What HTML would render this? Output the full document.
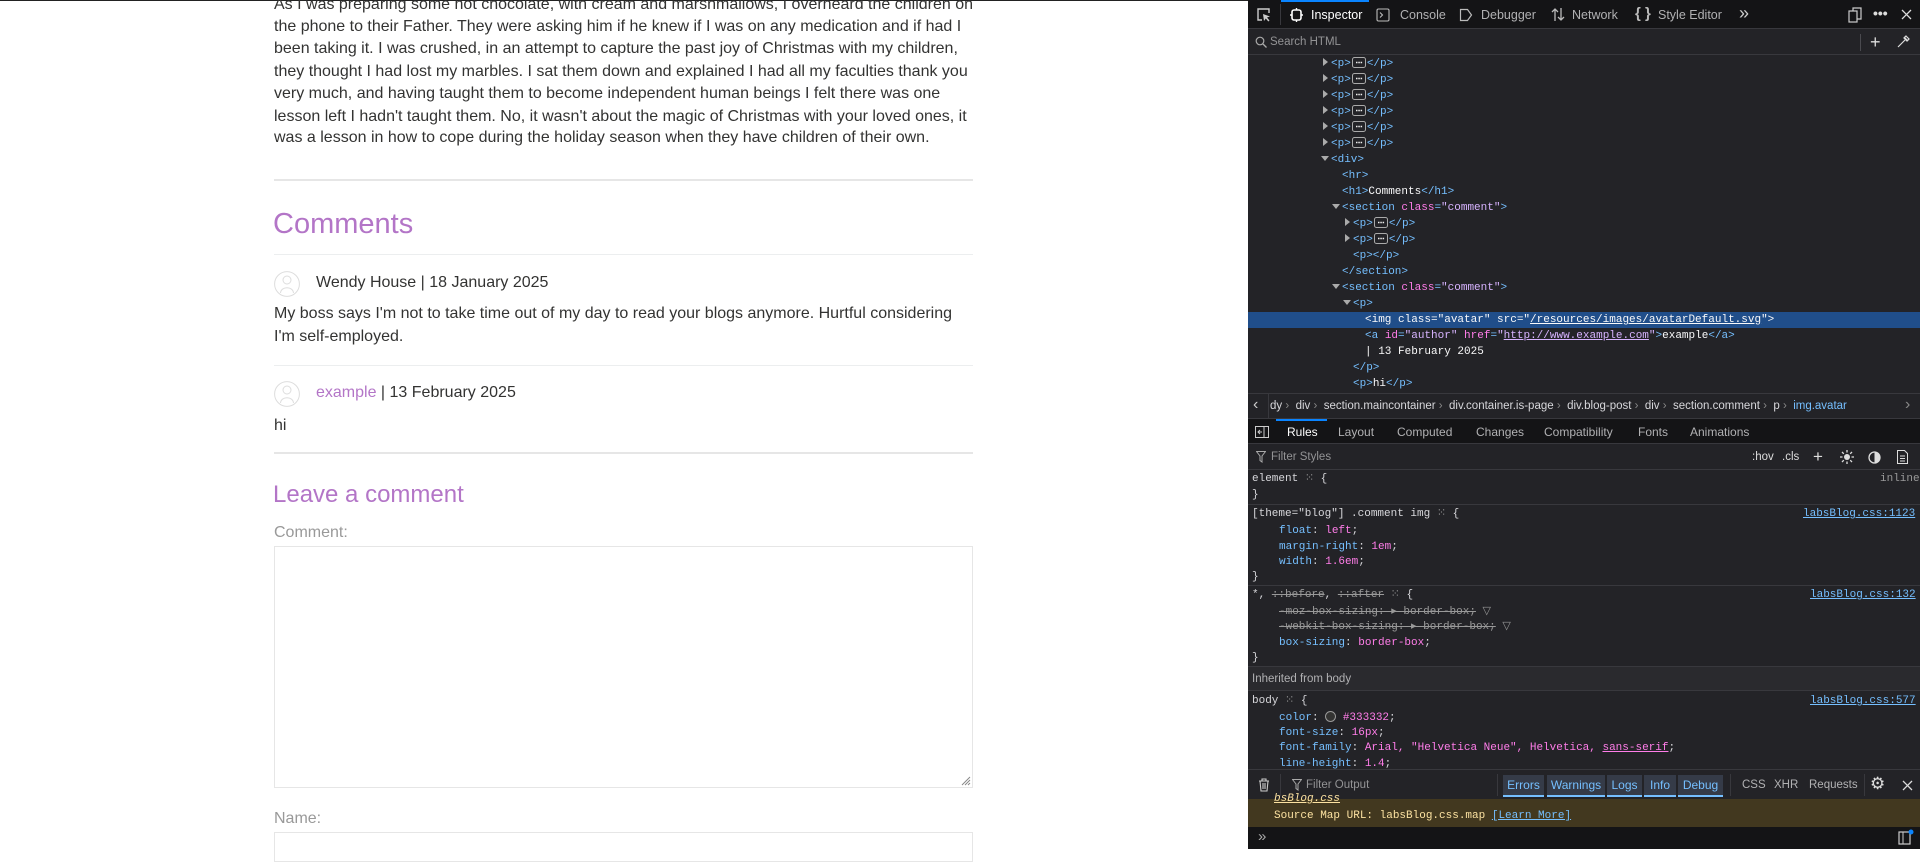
<!DOCTYPE html>
<html><head><meta charset="utf-8"><style>
*{margin:0;padding:0;box-sizing:border-box}
body{width:1920px;height:849px;overflow:hidden;background:#fff;position:relative;font-family:"Liberation Sans",Arial,sans-serif}
.a{position:absolute;white-space:nowrap}
.pg{color:#333332;font-size:16px;line-height:22px}
.pur{color:#b375c7}
.hr{position:absolute;left:274px;width:699px}
.dt{position:absolute;left:1248px;top:0;width:672px;height:849px;background:#232327;overflow:hidden;font-family:"Liberation Sans",sans-serif;font-size:12px;color:#d7d7db}
.m{font-family:"Liberation Mono",monospace;font-size:11px;line-height:16px;height:16px}
.t{color:#75bfff}.n{color:#ff7de9}.v{color:#d7b3ff}.w{color:#f9f9fa}
.tri{display:inline-block;width:0;height:0;border-left:5px solid #aaa;border-top:4px solid transparent;border-bottom:4px solid transparent;margin-right:3px}
.trd{display:inline-block;width:0;height:0;border-top:5px solid #aaa;border-left:4px solid transparent;border-right:4px solid transparent;margin-right:2px;vertical-align:1px}
.dots{display:inline-block;vertical-align:-2px;margin:0 1px}
.pr{color:#75bfff}.pv{color:#ff7de9}
.lnk{color:#75bfff;text-decoration:underline}
.sep{position:absolute;left:0;width:672px;height:1px;background:#38383d}
.cb{position:absolute;top:775px;height:22px;background:#353b48;border-bottom:2px solid #75bfff;color:#75bfff;line-height:20px;text-align:center;font-size:12px}
</style></head><body>
<div class="a" style="left:0;top:0;width:1248px;height:1px;background:#222"></div>

<div class="a pg" style="left:274px;top:-6px">As I was preparing some hot chocolate, with cream and marshmallows, I overheard the children on</div>
<div class="a pg" style="left:274px;top:16px">the phone to their Father. They were asking him if he knew if I was on any medication and if had I</div>
<div class="a pg" style="left:274px;top:38px">been taking it. I was crushed, in an attempt to capture the past joy of Christmas with my children,</div>
<div class="a pg" style="left:274px;top:61px">they thought I had lost my marbles. I sat them down and explained I had all my faculties thank you</div>
<div class="a pg" style="left:274px;top:83px">very much, and having taught them to become independent human beings I felt there was one</div>
<div class="a pg" style="left:274px;top:106px">lesson left I hadn't taught them. No, it wasn't about the magic of Christmas with your loved ones, it</div>
<div class="a pg" style="left:274px;top:127px">was a lesson in how to cope during the holiday season when they have children of their own.</div>

<div class="hr" style="top:179px;height:2px;background:#e6e6e6"></div>
<div class="a pur" style="left:273px;top:207px;font-size:29px;line-height:34px">Comments</div>
<div class="hr" style="top:254px;height:1px;background:#eceeef"></div>

<svg class="a" style="left:274px;top:271px" width="26" height="26" viewBox="0 0 26 26"><circle cx="13" cy="13" r="12.4" fill="none" stroke="#ddd" stroke-width="1"/><circle cx="13" cy="9" r="4" fill="none" stroke="#ddd"/><path d="M6.5 22 C7 15 19 15 19.5 22" fill="none" stroke="#ddd"/></svg>
<div class="a pg" style="left:316px;top:272px">Wendy House | 18 January 2025</div>
<div class="a pg" style="left:274px;top:303px">My boss says I'm not to take time out of my day to read your blogs anymore. Hurtful considering</div>
<div class="a pg" style="left:274px;top:326px">I'm self-employed.</div>
<div class="hr" style="top:365px;height:1px;background:#eceeef"></div>
<svg class="a" style="left:274px;top:381px" width="26" height="26" viewBox="0 0 26 26"><circle cx="13" cy="13" r="12.4" fill="none" stroke="#ddd" stroke-width="1"/><circle cx="13" cy="9" r="4" fill="none" stroke="#ddd"/><path d="M6.5 22 C7 15 19 15 19.5 22" fill="none" stroke="#ddd"/></svg>
<div class="a pg" style="left:316px;top:382px"><span class="pur">example</span> | 13 February 2025</div>
<div class="a pg" style="left:274px;top:415px">hi</div>
<div class="hr" style="top:452px;height:2px;background:#e6e6e6"></div>
<div class="a pur" style="left:273px;top:481px;font-size:24px;line-height:28px">Leave a comment</div>
<div class="a" style="left:274px;top:522px;font-size:16px;line-height:22px;color:#999">Comment:</div>
<div class="a" style="left:274px;top:546px;width:699px;height:242px;border:1px solid #e6e6e6"></div>
<svg class="a" style="left:960px;top:775px" width="11" height="11"><path d="M10 2L2 10M10 5L5 10M10 8L8 10" stroke="#888" stroke-width="1"/></svg>
<div class="a" style="left:274px;top:808px;font-size:16px;line-height:22px;color:#999">Name:</div>
<div class="a" style="left:274px;top:832px;width:699px;height:30px;border:1px solid #e6e6e6"></div>

<div class="dt">
 <div class="a" style="left:0;top:0;width:672px;height:29px;background:#141416;border-bottom:1px solid #38383d"></div>
 <div class="a" style="left:33px;top:0;width:88px;height:2px;background:#0a84ff"></div>
 <svg class="a" style="left:8px;top:7px" width="16" height="16"><path d="M6 13H2V2h11v4" fill="none" stroke="#ccc" stroke-width="1.4"/><path d="M7 7l7 2.5-3 1 2.5 3-1.2 1-2.5-3-1.8 2.5z" fill="#ccc"/></svg>
 <div class="a" style="left:32px;top:4px;width:1px;height:21px;background:#38383d"></div>
 <svg class="a" style="left:42px;top:8px" width="13" height="14"><rect x="2" y="2" width="9" height="10" rx="2" fill="none" stroke="#fff" stroke-width="1.6"/><path d="M6.5 0v2M6.5 12v2M0 7h2M11 7h2" stroke="#fff" stroke-width="1.4"/></svg>
 <div class="a" style="left:63px;top:7px;color:#fff;font-size:12.5px;line-height:16px">Inspector</div>
 <svg class="a" style="left:128px;top:8px" width="14" height="14"><rect x="1" y="1" width="12" height="12" rx="1.5" fill="none" stroke="#bbb" stroke-width="1.1"/><path d="M4 4.5l2.5 2.5L4 9.5" fill="none" stroke="#bbb" stroke-width="1.1"/></svg>
 <div class="a" style="left:152px;top:7px;color:#b1b1b3;font-size:12.5px;line-height:16px">Console</div>
 <svg class="a" style="left:211px;top:8px" width="14" height="14"><path d="M1.5 1.5h7l4 5.5-4 5.5h-7z" fill="none" stroke="#bbb" stroke-width="1.2"/></svg>
 <div class="a" style="left:233px;top:7px;color:#b1b1b3;font-size:12.5px;line-height:16px">Debugger</div>
 <svg class="a" style="left:303px;top:7px" width="14" height="15"><path d="M4 14V2M1 5l3-3 3 3M10 1v12M7 10l3 3 3-3" fill="none" stroke="#bbb" stroke-width="1.3"/></svg>
 <div class="a" style="left:324px;top:7px;color:#b1b1b3;font-size:12.5px;line-height:16px">Network</div>
 <div class="a" style="left:387px;top:5px;color:#bbb;font-size:15px;line-height:18px;font-weight:bold">{ }</div>
 <div class="a" style="left:410px;top:7px;color:#b1b1b3;font-size:12.5px;line-height:16px">Style Editor</div>
 <div class="a" style="left:491px;top:3px;color:#ccc;font-size:18px;line-height:20px">»</div>
 <svg class="a" style="left:600px;top:7px" width="14" height="16"><rect x="1" y="4" width="8" height="11" fill="none" stroke="#ccc" stroke-width="1.2"/><path d="M5 4V1h8v11h-4" fill="none" stroke="#ccc" stroke-width="1.2"/></svg>
 <div class="a" style="left:625px;top:4px;color:#ddd;font-size:14px;line-height:18px;font-weight:bold">•••</div>
 <svg class="a" style="left:653px;top:9px" width="11" height="11"><path d="M1 1l9 9M10 1l-9 9" stroke="#ddd" stroke-width="1.3"/></svg>

 <div class="a" style="left:0;top:30px;width:672px;height:25px;background:#232327;border-bottom:1px solid #38383d"></div>
 <svg class="a" style="left:7px;top:36px" width="12" height="12"><circle cx="5" cy="5" r="3.8" fill="none" stroke="#aaa" stroke-width="1.2"/><path d="M8 8l3.5 3.5" stroke="#aaa" stroke-width="1.3"/></svg>
 <div class="a" style="left:22px;top:35px;color:#939395;font-size:11.5px;line-height:14px">Search HTML</div>
 <div class="a" style="left:612px;top:34px;width:1px;height:17px;background:#4a4a4f"></div>
 <div class="a" style="left:622px;top:30px;color:#ddd;font-size:18px;line-height:24px">+</div>
 <svg class="a" style="left:648px;top:35px" width="14" height="14"><path d="M2 12l7-7M8 2l4 4M10 1l3 3-2 2-3-3z" fill="none" stroke="#ddd" stroke-width="1.2"/></svg>

 <div class="a m" style="left:75px;top:56px"><span class="tri"></span><span class="t">&lt;p&gt;</span><svg class="dots" width="14" height="11"><rect x="0.5" y="0.5" width="13" height="10" rx="2" fill="none" stroke="#aaa"/><path d="M4 5.5h1.5M6.3 5.5h1.5M8.6 5.5h1.5" stroke="#eee" stroke-width="1.5"/></svg><span class="t">&lt;/p&gt;</span></div>
 <div class="a m" style="left:75px;top:72px"><span class="tri"></span><span class="t">&lt;p&gt;</span><svg class="dots" width="14" height="11"><rect x="0.5" y="0.5" width="13" height="10" rx="2" fill="none" stroke="#aaa"/><path d="M4 5.5h1.5M6.3 5.5h1.5M8.6 5.5h1.5" stroke="#eee" stroke-width="1.5"/></svg><span class="t">&lt;/p&gt;</span></div>
 <div class="a m" style="left:75px;top:88px"><span class="tri"></span><span class="t">&lt;p&gt;</span><svg class="dots" width="14" height="11"><rect x="0.5" y="0.5" width="13" height="10" rx="2" fill="none" stroke="#aaa"/><path d="M4 5.5h1.5M6.3 5.5h1.5M8.6 5.5h1.5" stroke="#eee" stroke-width="1.5"/></svg><span class="t">&lt;/p&gt;</span></div>
 <div class="a m" style="left:75px;top:104px"><span class="tri"></span><span class="t">&lt;p&gt;</span><svg class="dots" width="14" height="11"><rect x="0.5" y="0.5" width="13" height="10" rx="2" fill="none" stroke="#aaa"/><path d="M4 5.5h1.5M6.3 5.5h1.5M8.6 5.5h1.5" stroke="#eee" stroke-width="1.5"/></svg><span class="t">&lt;/p&gt;</span></div>
 <div class="a m" style="left:75px;top:120px"><span class="tri"></span><span class="t">&lt;p&gt;</span><svg class="dots" width="14" height="11"><rect x="0.5" y="0.5" width="13" height="10" rx="2" fill="none" stroke="#aaa"/><path d="M4 5.5h1.5M6.3 5.5h1.5M8.6 5.5h1.5" stroke="#eee" stroke-width="1.5"/></svg><span class="t">&lt;/p&gt;</span></div>
 <div class="a m" style="left:75px;top:136px"><span class="tri"></span><span class="t">&lt;p&gt;</span><svg class="dots" width="14" height="11"><rect x="0.5" y="0.5" width="13" height="10" rx="2" fill="none" stroke="#aaa"/><path d="M4 5.5h1.5M6.3 5.5h1.5M8.6 5.5h1.5" stroke="#eee" stroke-width="1.5"/></svg><span class="t">&lt;/p&gt;</span></div>
 <div class="a m" style="left:73px;top:152px"><span class="trd"></span><span class="t">&lt;div&gt;</span></div>
 <div class="a m" style="left:94px;top:168px"><span class="t">&lt;hr&gt;</span></div>
 <div class="a m" style="left:94px;top:184px"><span class="t">&lt;h1&gt;</span><span class="w">Comments</span><span class="t">&lt;/h1&gt;</span></div>
 <div class="a m" style="left:84px;top:200px"><span class="trd"></span><span class="t">&lt;section </span><span class="n">class</span><span class="t">=</span><span class="v">"comment"</span><span class="t">&gt;</span></div>
 <div class="a m" style="left:97px;top:216px"><span class="tri"></span><span class="t">&lt;p&gt;</span><svg class="dots" width="14" height="11"><rect x="0.5" y="0.5" width="13" height="10" rx="2" fill="none" stroke="#aaa"/><path d="M4 5.5h1.5M6.3 5.5h1.5M8.6 5.5h1.5" stroke="#eee" stroke-width="1.5"/></svg><span class="t">&lt;/p&gt;</span></div>
 <div class="a m" style="left:97px;top:232px"><span class="tri"></span><span class="t">&lt;p&gt;</span><svg class="dots" width="14" height="11"><rect x="0.5" y="0.5" width="13" height="10" rx="2" fill="none" stroke="#aaa"/><path d="M4 5.5h1.5M6.3 5.5h1.5M8.6 5.5h1.5" stroke="#eee" stroke-width="1.5"/></svg><span class="t">&lt;/p&gt;</span></div>
 <div class="a m" style="left:105px;top:248px"><span class="t">&lt;p&gt;&lt;/p&gt;</span></div>
 <div class="a m" style="left:94px;top:264px"><span class="t">&lt;/section&gt;</span></div>
 <div class="a m" style="left:84px;top:280px"><span class="trd"></span><span class="t">&lt;section </span><span class="n">class</span><span class="t">=</span><span class="v">"comment"</span><span class="t">&gt;</span></div>
 <div class="a m" style="left:95px;top:296px"><span class="trd"></span><span class="t">&lt;p&gt;</span></div>
 <div class="a" style="left:0;top:312px;width:672px;height:16px;background:#204e8a"></div>
 <div class="a m w" style="left:117px;top:312px">&lt;img class="avatar" src="<u>/resources/images/avatarDefault.svg</u>"&gt;</div>
 <div class="a m" style="left:117px;top:328px"><span class="t">&lt;a </span><span class="n">id</span><span class="t">=</span><span class="v">"author"</span> <span class="n">href</span><span class="t">=</span><span class="v">"<u>http://www.example.com</u>"</span><span class="t">&gt;</span><span class="w">example</span><span class="t">&lt;/a&gt;</span></div>
 <div class="a m w" style="left:117px;top:344px">| 13 February 2025</div>
 <div class="a m" style="left:105px;top:360px"><span class="t">&lt;/p&gt;</span></div>
 <div class="a m" style="left:105px;top:376px"><span class="t">&lt;p&gt;</span><span class="w">hi</span><span class="t">&lt;/p&gt;</span></div>

 <div class="a" style="left:0;top:393px;width:672px;height:26px;background:#232327;border-top:1px solid #38383d;border-bottom:1px solid #38383d"></div>
 <div class="a" style="left:5px;top:396px;color:#ccc;font-size:16px;line-height:18px">‹</div>
 <div class="a" style="left:20px;top:394px;width:1px;height:24px;background:#38383d"></div>
 <div class="a" style="left:22px;top:399px;color:#d7d7db;font-size:11.5px;line-height:14px">dy <span style="color:#888">›</span> &nbsp;div <span style="color:#888">›</span> &nbsp;section.maincontainer <span style="color:#888">›</span> &nbsp;div.container.is-page <span style="color:#888">›</span> &nbsp;div.blog-post <span style="color:#888">›</span> &nbsp;div <span style="color:#888">›</span> &nbsp;section.comment <span style="color:#888">›</span> &nbsp;p <span style="color:#888">›</span> &nbsp;<span style="color:#75bfff">img.avatar</span></div>
 <div class="a" style="left:657px;top:396px;color:#888;font-size:16px;line-height:18px">›</div>

 <div class="a" style="left:0;top:419px;width:672px;height:25px;background:#141416;border-bottom:1px solid #38383d"></div>
 <div class="a" style="left:28px;top:419px;width:51px;height:2px;background:#0a84ff"></div>
 <svg class="a" style="left:7px;top:426px" width="14" height="12"><rect x="0.5" y="0.5" width="13" height="11" fill="none" stroke="#ccc"/><path d="M9 1v10M3 6h4M5 4l-2 2 2 2" fill="none" stroke="#ccc"/></svg>
 <div class="a" style="left:39px;top:425px;color:#fff;font-size:12px;line-height:14px">Rules</div>
 <div class="a" style="left:90px;top:425px;color:#b1b1b3;font-size:12px;line-height:14px">Layout</div>
 <div class="a" style="left:149px;top:425px;color:#b1b1b3;font-size:12px;line-height:14px">Computed</div>
 <div class="a" style="left:228px;top:425px;color:#b1b1b3;font-size:12px;line-height:14px">Changes</div>
 <div class="a" style="left:296px;top:425px;color:#b1b1b3;font-size:12px;line-height:14px">Compatibility</div>
 <div class="a" style="left:390px;top:425px;color:#b1b1b3;font-size:12px;line-height:14px">Fonts</div>
 <div class="a" style="left:442px;top:425px;color:#b1b1b3;font-size:12px;line-height:14px">Animations</div>

 <div class="a" style="left:0;top:445px;width:672px;height:25px;background:#232327;border-bottom:1px solid #38383d"></div>
 <svg class="a" style="left:8px;top:451px" width="10" height="12"><path d="M0.5 0.5h9L6 5v6l-2-1.5V5z" fill="none" stroke="#aaa"/></svg>
 <div class="a" style="left:23px;top:450px;color:#939395;font-size:11.5px;line-height:14px">Filter Styles</div>
 <div class="a" style="left:504px;top:450px;color:#ddd;font-size:11.5px;line-height:14px">:hov</div>
 <div class="a" style="left:534px;top:450px;color:#ddd;font-size:11.5px;line-height:14px">.cls</div>
 <div class="a" style="left:565px;top:445px;color:#ddd;font-size:17px;line-height:24px">+</div>
 <svg class="a" style="left:592px;top:450px" width="14" height="14"><circle cx="7" cy="7" r="3" fill="#ddd"/><path d="M7 0v2.5M7 11.5V14M0 7h2.5M11.5 7H14M2 2l1.8 1.8M10.2 10.2L12 12M12 2l-1.8 1.8M3.8 10.2L2 12" stroke="#ddd" stroke-width="1.3"/></svg>
 <svg class="a" style="left:620px;top:451px" width="13" height="13"><circle cx="6.5" cy="6.5" r="5.5" fill="none" stroke="#ddd" stroke-width="1.3"/><path d="M6.5 1a5.5 5.5 0 0 1 0 11z" fill="#ddd"/></svg>
 <svg class="a" style="left:649px;top:450px" width="11" height="14"><path d="M0.5 0.5h7l3 3v10h-10z" fill="none" stroke="#ddd"/><path d="M3 6h5M3 8.5h5M3 11h5" stroke="#ddd"/></svg>

 <div class="a m" style="left:4px;top:471px;color:#d7d7db">element <span style="color:#999">⁙</span> {</div>
 <div class="a m" style="left:632px;top:471px;color:#999">inline</div>
 <div class="a m" style="left:4px;top:487px;color:#d7d7db">}</div>
 <div class="sep" style="top:504px"></div>
 <div class="a m" style="left:4px;top:506px;color:#d7d7db">[theme="blog"] .comment img <span style="color:#999">⁙</span> {</div>
 <div class="a m lnk" style="left:555px;top:506px">labsBlog.css:1123</div>
 <div class="a m" style="left:31px;top:523px"><span class="pr">float</span>: <span class="pv">left</span>;</div>
 <div class="a m" style="left:31px;top:539px"><span class="pr">margin-right</span>: <span class="pv">1em</span>;</div>
 <div class="a m" style="left:31px;top:554px"><span class="pr">width</span>: <span class="pv">1.6em</span>;</div>
 <div class="a m" style="left:4px;top:569px;color:#d7d7db">}</div>
 <div class="sep" style="top:585px"></div>
 <div class="a m" style="left:4px;top:587px;color:#d7d7db">*, <s style="color:#999">::before</s>, <s style="color:#999">::after</s> <span style="color:#999">⁙</span> {</div>
 <div class="a m lnk" style="left:562px;top:587px">labsBlog.css:132</div>
 <div class="a m" style="left:31px;top:604px;color:#999"><s>-moz-box-sizing: ▸ border-box;</s> ▽</div>
 <div class="a m" style="left:31px;top:619px;color:#999"><s>-webkit-box-sizing: ▸ border-box;</s> ▽</div>
 <div class="a m" style="left:31px;top:635px"><span class="pr">box-sizing</span>: <span class="pv">border-box</span>;</div>
 <div class="a m" style="left:4px;top:650px;color:#d7d7db">}</div>
 <div class="a" style="left:0;top:666px;width:672px;height:25px;background:#2a2a2e;border-top:1px solid #38383d;border-bottom:1px solid #38383d"></div>
 <div class="a" style="left:4px;top:672px;color:#b1b1b3;font-size:11.5px;line-height:14px">Inherited from body</div>
 <div class="a m" style="left:4px;top:693px;color:#d7d7db">body <span style="color:#999">⁙</span> {</div>
 <div class="a m lnk" style="left:562px;top:693px">labsBlog.css:577</div>
 <div class="a m" style="left:31px;top:710px"><span class="pr">color</span>: <span style="display:inline-block;width:11px;height:11px;border-radius:50%;background:#333332;border:1px solid #999;vertical-align:-2px"></span> <span class="pv">#333332</span>;</div>
 <div class="a m" style="left:31px;top:725px"><span class="pr">font-size</span>: <span class="pv">16px</span>;</div>
 <div class="a m" style="left:31px;top:740px"><span class="pr">font-family</span>: <span class="pv">Arial, "Helvetica Neue", Helvetica, <u>sans-serif</u></span>;</div>
 <div class="a m" style="left:31px;top:756px"><span class="pr">line-height</span>: <span class="pv">1.4</span>;</div>

 <div class="a" style="left:0;top:769px;width:672px;height:30px;background:#232327;border-top:1px solid #38383d"></div>
 <svg class="a" style="left:10px;top:778px" width="12" height="14"><path d="M1 3h10M4 3V1h4v2M2 3l1 10h6l1-10M5 5v6M7 5v6" fill="none" stroke="#ccc" stroke-width="1.1"/></svg>
 <div class="a" style="left:32px;top:774px;width:1px;height:22px;background:#38383d"></div>
 <svg class="a" style="left:44px;top:779px" width="10" height="12"><path d="M0.5 0.5h9L6 5v6l-2-1.5V5z" fill="none" stroke="#aaa"/></svg>
 <div class="a" style="left:58px;top:778px;color:#939395;font-size:11.5px;line-height:14px">Filter Output</div>
 <div class="a" style="left:249px;top:774px;width:1px;height:22px;background:#38383d"></div>
 <div class="cb" style="left:255px;width:41px">Errors</div>
 <div class="cb" style="left:299px;width:58px">Warnings</div>
 <div class="cb" style="left:359px;width:35px">Logs</div>
 <div class="cb" style="left:396px;width:32px">Info</div>
 <div class="cb" style="left:430px;width:45px">Debug</div>
 <div class="a" style="left:482px;top:774px;width:1px;height:22px;background:#38383d"></div>
 <div class="a" style="left:494px;top:778px;color:#b1b1b3;font-size:11.5px;line-height:14px">CSS</div>
 <div class="a" style="left:526px;top:778px;color:#b1b1b3;font-size:11.5px;line-height:14px">XHR</div>
 <div class="a" style="left:561px;top:778px;color:#b1b1b3;font-size:11.5px;line-height:14px">Requests</div>
 <div class="a" style="left:616px;top:774px;width:1px;height:22px;background:#38383d"></div>
 <div class="a" style="left:622px;top:774px;color:#ddd;font-size:17px;line-height:20px">⚙</div>
 <svg class="a" style="left:654px;top:780px" width="11" height="11"><path d="M1 1l9 9M10 1l-9 9" stroke="#ddd" stroke-width="1.3"/></svg>

 <div class="a" style="left:0;top:799px;width:672px;height:28px;background:#42381f"></div>
 <div class="a m" style="left:26px;top:791px;color:#fce2a1;font-style:italic"><u>bsBlog.css</u></div>
 <div class="a m" style="left:26px;top:808px;color:#fce2a1">Source Map URL: labsBlog.css.map <span class="lnk">[Learn More]</span></div>
 <div class="a" style="left:0;top:827px;width:672px;height:22px;background:#141416"></div>
 <div class="a" style="left:10px;top:828px;color:#aaa;font-size:15px;line-height:18px">»</div>
 <svg class="a" style="left:650px;top:829px" width="16" height="16"><rect x="1" y="3" width="11" height="12" fill="none" stroke="#ccc" stroke-width="1.2"/><path d="M5 3v12" stroke="#ccc"/><circle cx="13" cy="3" r="2.5" fill="#0a84ff"/></svg>
</div>
</body></html>
